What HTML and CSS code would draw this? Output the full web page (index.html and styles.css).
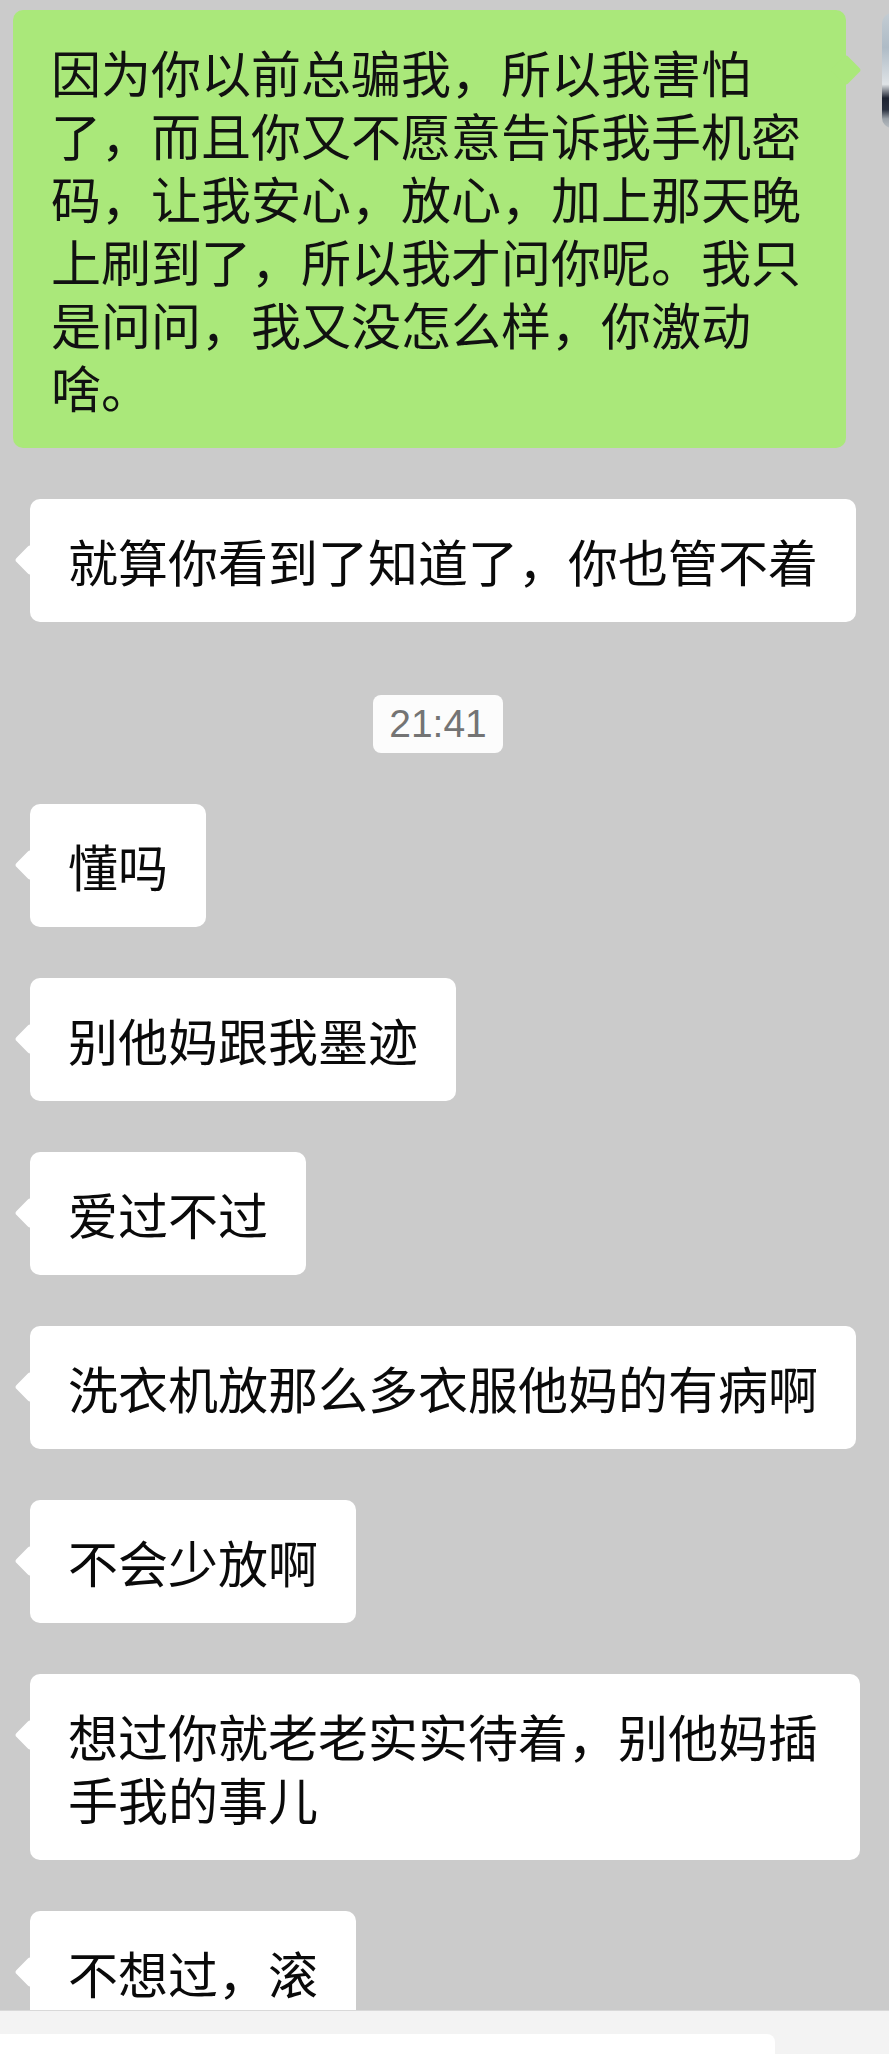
FILE: index.html
```html
<!DOCTYPE html>
<html lang="zh-CN">
<head>
    <meta charset="UTF-8">
    <meta name="viewport" content="width=device-width, initial-scale=1.0">
    <title>聊天记录</title>
    <link rel="stylesheet" href="styles.css">
</head>
<body>
    <div class="screen">
        <div class="chat">
            <div class="row row-self">
                <div class="bubble bubble-self">因为你以前总骗我，所以我害怕了，而且你又不愿意告诉我手机密码，让我安心，放心，加上那天晚上刷到了，所以我才问你呢。我只是问问，我又没怎么样，你激动啥。</div>
                <div class="avatar"></div>
            </div>

            <div class="row"><div class="bubble">就算你看到了知道了，你也管不着</div></div>

            <div class="time">21:41</div>

            <div class="row"><div class="bubble">懂吗</div></div>
            <div class="row"><div class="bubble">别他妈跟我墨迹</div></div>
            <div class="row"><div class="bubble">爱过不过</div></div>
            <div class="row"><div class="bubble">洗衣机放那么多衣服他妈的有病啊</div></div>
            <div class="row"><div class="bubble">不会少放啊</div></div>
            <div class="row"><div class="bubble">想过你就老老实实待着，别他妈插手我的事儿</div></div>
            <div class="row"><div class="bubble">不想过，滚</div></div>
        </div>

        <!-- input bar, mostly cut off at the bottom -->
        <div class="input-bar">
            <div class="input-box"></div>
        </div>
    </div>
</body>
</html>
```

FILE: styles.css
```css
/* General styles */
html, body {
    margin: 0;
    padding: 0;
}

body {
    font-family: "Noto Sans CJK SC", sans-serif;
    background-color: #cbcbcb;
}

.screen {
    height: 2054px;
    display: flex;
    flex-direction: column;
    overflow: hidden;
}

/* Chat area */
.chat {
    flex: 1;
    min-height: 0;
    overflow: hidden;
    display: flex;
    flex-direction: column;
    gap: 51px;
    padding-top: 10px;
}

.chat > * {
    flex-shrink: 0;
}

.row {
    display: flex;
    align-items: flex-start;
    padding-left: 30px;
}

.row-self {
    padding-left: 13px;
    gap: 36px;
}

/* Bubbles */
.bubble {
    position: relative;
    box-sizing: border-box;
    max-width: 830px;
    padding: 30px 38px;
    background-color: #ffffff;
    border-radius: 10px;
    font-size: 50px;
    line-height: 63px;
    color: #0a0a0a;
}

/* little arrow on the side of each bubble */
.bubble::before {
    content: "";
    position: absolute;
    left: -11px;
    top: 50px;
    width: 22px;
    height: 22px;
    background-color: inherit;
    border-radius: 3px;
    transform: rotate(45deg);
}

.bubble-self {
    flex: 0 0 833px;
    width: 833px;
    max-width: none;
    background-color: #aae87a;
    color: #111111;
}

.bubble-self::before {
    left: auto;
    right: -11px;
    top: 49px;
}

.avatar {
    flex: 0 0 110px;
    height: 115px;
    margin-top: 3px;
    border-radius: 10px;
    background: linear-gradient(180deg, #c3ccd3 0%, #aebbc6 30%, #dfe3e6 62%, #1d2331 74%, #2a3140 84%, #9aa1a8 92%, #b7bcc1 100%);
}

/* Time stamp */
.time {
    align-self: center;
    margin: 22px 13px 0 0;
    padding: 0 16px;
    height: 58px;
    line-height: 58px;
    font-family: "Liberation Sans", Arial, sans-serif;
    font-size: 39px;
    color: #747474;
    background-color: #fcfcfc;
    border-radius: 8px;
}

/* Input bar */
.input-bar {
    flex: 0 0 32px;
    box-sizing: border-box;
    padding-top: 23px;
    background-color: #f3f3f3;
    border-top: 1px solid #d8d8d8;
}

.input-box {
    width: 775px;
    height: 20px;
    background-color: #ffffff;
    border-radius: 0 8px 0 0;
}
```
